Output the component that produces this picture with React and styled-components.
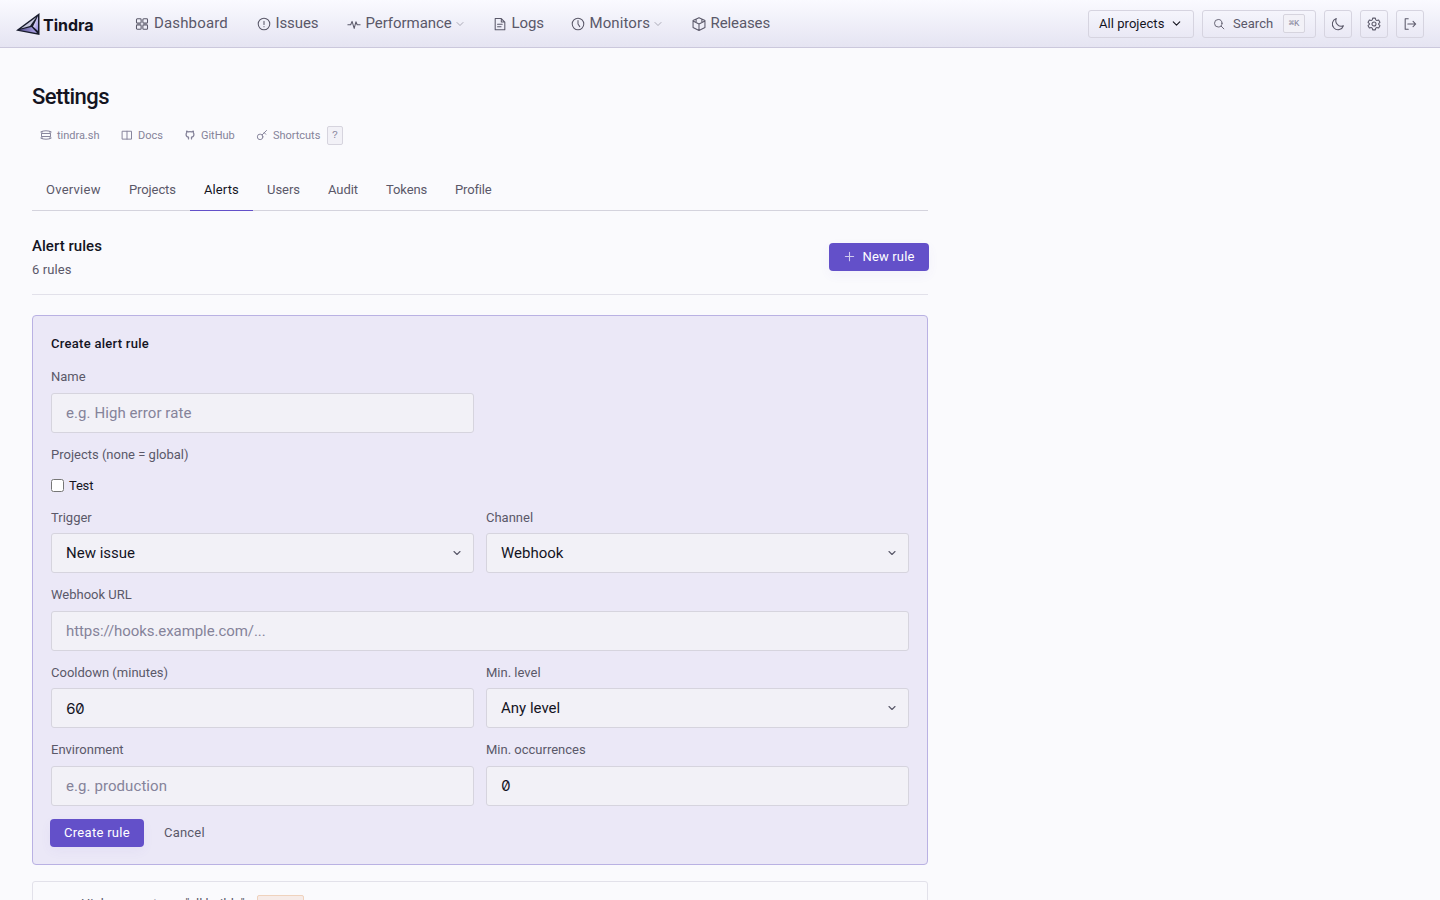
import React from 'react'
import styled, { createGlobalStyle } from 'styled-components';

const GlobalStyle=createGlobalStyle`
*{box-sizing:border-box;}
body{
    margin:0;
    height:900px;
    overflow:hidden;
    background:#fafafd;
    color:#14141f;
    font-family:"Roboto","Liberation Sans",sans-serif;
    font-size:15px;
}
button,input,select{font-family:inherit;}
`

const icons={
    grid:<><rect x="1.7" y="2" width="5.3" height="5" rx="1"/><rect x="9" y="2" width="5.3" height="5" rx="1"/><rect x="1.7" y="9" width="5.3" height="5" rx="1"/><rect x="9" y="9" width="5.3" height="5" rx="1"/></>,
    alert:<><circle cx="8" cy="8" r="6.6"/><path d="M8 4.8v3.7M8 11v.2"/></>,
    pulse:<path d="M1 8.8h3.2L5.8 5l2.4 8 2-7.5 1.4 3.3H15"/>,
    file:<path d="M2.5 1.8h7L13.5 5.8v8.7h-11zM9.5 1.8v4h4M5.2 8.3h5.3M5.2 11.2h4"/>,
    clock:<><circle cx="8" cy="8" r="6.6"/><path d="M8 4v4l2 3"/></>,
    box:<path d="M8 .8l6.8 3.2v8L8 15.4 1.2 12V4zM1.2 4.5L8 8l6.8-3.5M8 8v7M4.7 2.7v3.5M11.3 2.7v3.5"/>,
    chevron:<path d="M4 6l4 4 4-4"/>,
    search:<><circle cx="7" cy="7" r="5"/><path d="M11 11l3.5 3.5"/></>,
    moon:<path d="M6 1.8a6.5 6.5 0 1 0 8.2 8.2A6.3 6.3 0 0 1 6 1.8z"/>,
    gear:<><path d="M6.5 1.3h3l.5 2 1.3.8 2-.6 1.5 2.6-1.5 1.4v1l1.5 1.4-1.5 2.6-2-.6-1.3.8-.5 2h-3l-.5-2-1.3-.8-2 .6-1.5-2.6 1.5-1.4v-1L1.2 6.1l1.5-2.6 2 .6L6 3.3z"/><circle cx="8" cy="8" r="2.3"/></>,
    logout:<path d="M6 2H2.5v12H6M5.5 8h9M11.5 5l3 3-3 3"/>,
    site:<path d="M1 3.8C4 1.8 12 1.8 15 3.8M1 12.2c3 2 11 2 14 0M3 3.2C1.5 6.5 1.5 9.500 3 12.8M13 3.2c1.500 3.300 1.500 6.300 0 9.600M2.500 6h11M2.500 10h11"/>,
    book:<><rect x="2" y="3" width="12" height="10.5"/><path d="M8 3v10.5"/></>,
    github:<path d="M6 13.2v-2.4C3.7 10.5 2.8 9 2.8 7.2c0-1 .3-1.800.8-2.300l-.1-2L6 3.800a8 8 0 0 1 4 0l2.500-.9-.1 2c.5.5.8 1.300.8 2.300 0 1.800-.9 3.300-3.200 3.600v2.400"/>,
    key:<><circle cx="5.5" cy="10.5" r="3.7"/><path d="M8.2 7.8L14 2M11 5l2 2"/></>,
    plus:<path d="M8 2v12M2 8h12"/>,
}

const Svg=styled.svg`
    width:${p=>p.$size}px;
    height:${p=>p.$size}px;
    flex:none;
    fill:none;
    stroke:currentColor;
    stroke-width:${p=>p.$stroke};
    stroke-linecap:round;
    stroke-linejoin:round;
    opacity:${p=>p.$opacity};
`
function Icon({name,size=14,stroke=1.2,opacity=1}) {
  return <Svg viewBox='0 0 16 16' $size={size} $stroke={stroke} $opacity={opacity}>{icons[name]}</Svg>
}

const Header=styled.header`
    display:flex;
    align-items:center;
    height:48px;
    padding:0 16px;
    background:linear-gradient(180deg,#fafaff 0%,#e5e4f2 100%);
    border-bottom:1px solid #cbc8dc;
`
const Brand=styled.div`
    display:flex;
    align-items:center;
    width:119px;
    svg{width:24px;height:24px;}
`
const BrandName=styled.span`
    margin:3px 0 0 3px;
    font:700 16px "Inter",sans-serif;
    letter-spacing:0;
    white-space:nowrap;
`
const Nav=styled.nav`
    display:flex;
    align-items:center;
    height:46px;
`
const NavItem=styled.a`
    display:flex;
    align-items:center;
    width:${p=>p.$w}px;
    color:#5a5869;
    font-size:15px;
    white-space:nowrap;
`
const NavLabel=styled.span`
    margin:0 2px 2px 5px;
    letter-spacing:${p=>p.$ls}px;
`
const Tools=styled.div`
    display:flex;
    gap:8px;
    margin-left:auto;
`
const Tool=styled.button`
    display:flex;
    align-items:center;
    justify-content:${p=>p.$w?'flex-start':'center'};
    gap:${p=>p.$dark?6:8}px;
    width:${p=>p.$w||28}px;
    height:28px;
    padding:0 ${p=>p.$w?10:0}px;
    border:1px solid #d6d4e0;
    border-radius:3px;
    background:transparent;
    color:${p=>p.$dark?'#14141f':'#5a5869'};
    font-size:13px;
    letter-spacing:0.05px;
    white-space:nowrap;
`
const Kbd=styled.kbd`
    display:grid;
    place-items:center;
    width:${p=>p.$w}px;
    height:19px;
    margin-left:${p=>p.$ml}px;
    border:1px solid #d6d4de;
    border-radius:2px;
    background:#f2f1f7;
    color:#85839a;
    font:${p=>p.$fs}px "Liberation Mono","DejaVu Sans Mono",monospace;
`
const Main=styled.main`
    width:960px;
    padding:34px 32px 0;
`
const Title=styled.h1`
    margin:0;
    height:30px;
    font-size:22px;
    line-height:30px;
    font-weight:500;
    letter-spacing:-0.55px;
`
const Links=styled.div`
    display:flex;
    align-items:center;
    height:20px;
    margin-top:13px;
    padding-left:8px;
`
const Link=styled.a`
    display:flex;
    align-items:center;
    gap:5px;
    width:${p=>p.$w}px;
    color:#85839a;
    font-size:11px;
    letter-spacing:-0.03px;
    white-space:nowrap;
`
const Tabs=styled.div`
    display:flex;
    height:42px;
    margin-top:24px;
    border-bottom:1px solid #d4d3dd;
`
const Tab=styled.a`
    height:42px;
    width:${p=>p.$w}px;
    padding-left:14px;
    border-bottom:1px solid ${p=>p.$active?'#6350c9':'transparent'};
    color:${p=>p.$active?'#14141f':'#5a5869'};
    font-size:13px;
    line-height:41px;
    letter-spacing:${p=>p.$ls}px;
    white-space:nowrap;
`
const SectionHead=styled.div`
    display:flex;
    justify-content:space-between;
    height:84px;
    padding-top:26px;
    border-bottom:1px solid #e2e1ea;
`
const SectionTitle=styled.h2`
    margin:0;
    font-size:15px;
    line-height:19px;
    font-weight:500;
    letter-spacing:0.05px;
`
const Count=styled.div`
    margin-top:4px;
    color:#5a5869;
    font-size:13px;
    line-height:19px;
    letter-spacing:0.1px;
`
const Primary=styled.button`
    display:flex;
    align-items:center;
    justify-content:center;
    gap:8px;
    width:${p=>p.$w}px;
    height:28px;
    margin:${p=>p.$m};
    padding:0 0 1px;
    border:0;
    border-radius:4px;
    background:#6350c9;
    color:#fff;
    font-size:13px;
    letter-spacing:${p=>p.$ls}px;
    box-shadow:0 4px 12px rgba(99,80,201,0.05);
    white-space:nowrap;
`
const Panel=styled.form`
    height:550px;
    margin-top:20px;
    padding:18px;
    border:1px solid #b9b1e3;
    border-radius:4px;
    background:#ebe8f7;
`
const PanelTitle=styled.h3`
    margin:0 0 14px;
    font-size:13px;
    line-height:19px;
    font-weight:500;
    letter-spacing:0.28px;
`
const Row=styled.div`
    display:grid;
    grid-template-columns:${p=>p.$full?'1fr':'1fr 1fr'};
    gap:12px;
    height:${p=>p.$h}px;
`
const Label=styled.label`
    display:block;
    height:${p=>p.$h}px;
    color:#5a5869;
    font-size:13px;
    line-height:19px;
`
const Input=styled.input`
    display:block;
    width:100%;
    height:40px;
    padding:0 14px;
    border:1px solid #d6d4de;
    border-radius:3px;
    outline:0;
    background:#f2f1f7;
    color:#14141f;
    font-size:15px;
    letter-spacing:${p=>p.type==='url'?-0.07:0.08}px;
    &::placeholder{color:#85839a;}
`
const NumberInput=styled(Input)`
    padding-bottom:${p=>p.$pb||0}px;
    font-family:"Inter",sans-serif;
    font-size:15px;
    letter-spacing:-0.7px;
    font-feature-settings:"zero" 1,"tnum" 1;
`
const Select=styled.div`
    display:flex;
    align-items:center;
    justify-content:space-between;
    height:40px;
    padding:0 10px 0 14px;
    border:1px solid #d6d4de;
    border-radius:3px;
    background:#f2f1f7;
    svg{color:#5a5869;}
`
const Check=styled.label`
    display:flex;
    align-items:center;
    height:20px;
    margin-bottom:13px;
    gap:5px;
    font-size:13px;
    letter-spacing:-0.2px;
    input{margin:0;width:13px;height:13px;}
`
const Actions=styled.div`
    display:flex;
    align-items:center;
    height:28px;
`
const Cancel=styled.button`
    margin-left:14px;
    padding-bottom:2px;
    border:0;
    background:none;
    color:#5a5869;
    font-size:13px;
    letter-spacing:0.2px;
`
const Rule=styled.div`
    display:flex;
    height:60px;
    margin-top:16px;
    padding:13px 48px;
    border:1px solid #e2e1ea;
    border-radius:3px;
    font-size:13px;
    line-height:17px;
`
const RuleName=styled.span`
    width:176px;
    color:#5a5869;
    white-space:nowrap;
`
const Badge=styled.span`
    width:47px;
    height:20px;
    border:1px solid #efd2bd;
    border-radius:2px;
    background:#f6ebe8;
    color:#b45a28;
    text-align:center;
    font-size:11px;
`

const nav=[
    ["grid","Dashboard",121.5,0.15],
    ["alert","Issues",90,-0.1],
    ["pulse","Performance",146,-0.05],
    ["file","Logs",78,-0.1],
    ["clock","Monitors",121,0.1],
    ["box","Releases",80,-0.1],
]
const links=[["site","tindra.sh",81],["book","Docs",63],["github","GitHub",72],["key","Shortcuts",64]]
const tabs=[["Overview",83,0.25],["Projects",75,-0.1],["Alerts",63,0.1],["Users",61,-0.05],["Audit",58,-0.05],["Tokens",69,-0.1],["Profile",65,-0.15]]

function Field({label,gap=26,children}) {
  return <div><Label $h={gap}>{label}</Label>{children}</div>
}
function Picker({value}) {
  return <Select>{value}<Icon name='chevron' size={12} stroke={1.5}/></Select>
}

function App() {
  return (
    <>
        <GlobalStyle/>
        <Header>
            <Brand>
                <svg viewBox='0 0 24 24'>
                    <defs>
                        <linearGradient id='sail' x1='0' y1='0' x2='1' y2='1'><stop offset='0' stopColor='#fff'/><stop offset='1' stopColor='#8f84dc'/></linearGradient>
                        <linearGradient id='hull' x1='0' y1='0' x2='1' y2='0'><stop offset='0' stopColor='#4b4580'/><stop offset='1' stopColor='#b5abf0'/></linearGradient>
                    </defs>
                    <path d='M23.5 1v22L0 18.5z' fill='#171a2b'/>
                    <path d='M20.5 5L5 16.500l9-2.500z' fill='#c6c7dc'/>
                    <path d='M22 4v15l-5-4.500z' fill='url(#sail)'/>
                    <path d='M3 18l12.500-3 5.500 6z' fill='url(#hull)'/>
                </svg>
                <BrandName>Tindra</BrandName>
            </Brand>
            <Nav>
                {nav.map(([icon,label,w,ls])=>(
                    <NavItem key={label} $w={w}>
                        <Icon name={icon}/>
                        <NavLabel $ls={ls}>{label}</NavLabel>
                        {(label==="Performance"||label==="Monitors")&&<Icon name='chevron' size={12} opacity={0.5}/>}
                    </NavItem>
                ))}
            </Nav>
            <Tools>
                <Tool $w={106} $dark>All projects<Icon name='chevron' size={13} stroke={1.4}/></Tool>
                <Tool $w={114}><Icon name='search' size={12}/>Search<Kbd $w={22} $ml={2} $fs={9}>⌘K</Kbd></Tool>
                <Tool><Icon name='moon'/></Tool>
                <Tool><Icon name='gear'/></Tool>
                <Tool><Icon name='logout'/></Tool>
            </Tools>
        </Header>
        <Main>
            <Title>Settings</Title>
            <Links>
                {links.map(([icon,label,w])=><Link key={label} $w={w}><Icon name={icon} size={12} stroke={icon==="github"?1.7:1.3}/>{label}</Link>)}
                <Kbd $w={16} $ml={7} $fs={10}>?</Kbd>
            </Links>
            <Tabs>
                {tabs.map(([label,w,ls])=><Tab key={label} $w={w} $ls={ls} $active={label==="Alerts"}>{label}</Tab>)}
            </Tabs>
            <SectionHead>
                <div>
                    <SectionTitle>Alert rules</SectionTitle>
                    <Count>6 rules</Count>
                </div>
                <Primary $w={100} $m='6px -1px 0 0' $ls={0.15}><Icon name='plus' size={11} stroke={1.6} opacity={0.7}/>New rule</Primary>
            </SectionHead>
            <Panel>
                <PanelTitle>Create alert rule</PanelTitle>
                <Row $h={78}><Field label='Name'><Input placeholder='e.g. High error rate'/></Field></Row>
                <Label $h={30}>Projects (none = global)</Label>
                <Check><input type='checkbox'/>Test</Check>
                <Row $h={77}>
                    <Field label='Trigger' gap={25}><Picker value='New issue'/></Field>
                    <Field label='Channel' gap={25}><Picker value='Webhook'/></Field>
                </Row>
                <Row $full $h={78}><Field label='Webhook URL'><Input type='url' placeholder='https://hooks.example.com/...'/></Field></Row>
                <Row $h={77}>
                    <Field label='Cooldown (minutes)' gap={25}><NumberInput defaultValue='60'/></Field>
                    <Field label='Min. level' gap={25}><Picker value='Any level'/></Field>
                </Row>
                <Row $h={79}>
                    <Field label='Environment'><Input placeholder='e.g. production'/></Field>
                    <Field label='Min. occurrences'><NumberInput $pb={2} defaultValue='0'/></Field>
                </Row>
                <Actions>
                    <Primary type='button' $w={94} $m='0 0 0 -1px' $ls={0.3}>Create rule</Primary>
                    <Cancel type='button'>Cancel</Cancel>
                </Actions>
            </Panel>
            <Rule>
                <RuleName>High error rate on "all builds"</RuleName>
                <Badge>error</Badge>
            </Rule>
        </Main>
    </>
  )
}

export default App;
